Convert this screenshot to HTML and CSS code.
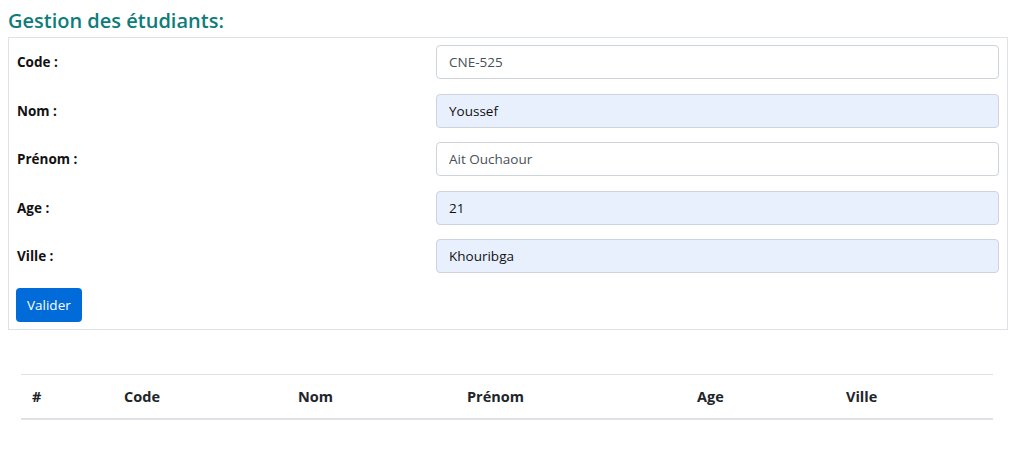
FILE: index.html
```html
<!DOCTYPE html>
<html lang="fr">
<head>
<meta charset="utf-8">
<title>Gestion des étudiants</title>
<link rel="stylesheet" href="styles.css">
</head>
<body>
<h2 class="title">Gestion des étudiants:</h2>
<form class="form-box">
  <div class="form-row">
    <label class="label">Code :</label>
    <input class="input" type="text" value="CNE-525">
  </div>
  <div class="form-row">
    <label class="label">Nom :</label>
    <input class="input filled" type="text" value="Youssef">
  </div>
  <div class="form-row">
    <label class="label">Prénom :</label>
    <input class="input" type="text" value="Ait Ouchaour">
  </div>
  <div class="form-row">
    <label class="label">Age :</label>
    <input class="input filled" type="text" value="21">
  </div>
  <div class="form-row">
    <label class="label">Ville :</label>
    <input class="input filled" type="text" value="Khouribga">
  </div>
  <div class="actions">
    <button class="btn" type="button">Valider</button>
  </div>
</form>
<div class="table-wrap">
  <table class="table">
    <thead>
      <tr>
        <th class="c-num">#</th>
        <th class="c-code">Code</th>
        <th class="c-nom">Nom</th>
        <th class="c-prenom">Prénom</th>
        <th class="c-age">Age</th>
        <th class="c-ville">Ville</th>
      </tr>
    </thead>
    <tbody></tbody>
  </table>
</div>
</body>
</html>
```

FILE: styles.css
```css
* { box-sizing: border-box; }
body {
  margin: 8px 10px 8px 8px;
  font-family: "Open Sans", "Noto Sans", sans-serif;
  color: #212529;
  background: #fff;
}
.title {
  margin: 0 0 4px 0;
  font-size: 20px;
  font-weight: 600;
  line-height: 25px;
  color: #0f7c7c;
}
.form-box {
  border: 1px solid #dee2e6;
  padding: 7px 8px 7px 8px;
  display: flex;
  flex-direction: column;
  gap: 14.5px;
}
.form-row {
  display: grid;
  grid-template-columns: 419px 1fr;
  align-items: center;
}
.label {
  font-size: 13.5px;
  font-weight: 700;
  color: #111;
}
.input {
  height: 34px;
  border: 1px solid #ced4da;
  border-radius: 4px;
  padding: 0 12px;
  font-family: inherit;
  font-size: 13.5px;
  color: #495057;
  background: #fff;
  outline: none;
}
.input.filled {
  background: #e8f0fe;
  color: #111;
}
.actions { display: flex; }
.btn {
  height: 34px;
  margin-left: -1px;
  padding: 0 11px;
  border: none;
  border-radius: 4px;
  background: #006bd9;
  color: #fff;
  font-family: inherit;
  font-size: 13.5px;
}
.table-wrap {
  padding: 44px 15px 0 13px;
}
.table {
  width: 100%;
  border-collapse: collapse;
}
.table th {
  text-align: left;
  font-size: 14.5px;
  font-weight: 700;
  color: #212529;
  padding: 0 11px;
  height: 45px;
  border-top: 1px solid #dee2e6;
  border-bottom: 2px solid #dee2e6;
}
.c-num { width: 92px; }
.c-code { width: 174px; }
.c-nom { width: 169px; }
.c-prenom { width: 230px; }
.c-age { width: 149px; }
```
